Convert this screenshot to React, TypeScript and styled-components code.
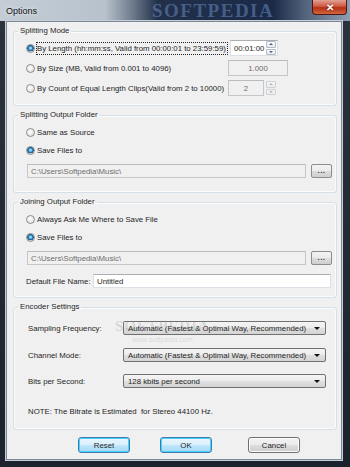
import styled, { createGlobalStyle } from "styled-components"

const GlobalStyle = createGlobalStyle`
  html, body {
    margin: 0;
    padding: 0;
    background: #1a222c;
  }
  body {
    font-family: "Liberation Sans", Arial, sans-serif;
    font-size: 7.8px;
    color: #1e1e1e;
  }
`

const Window = styled.div`
  width: 350px;
  height: 467px;
  display: flex;
  flex-direction: column;
  background: #1d252f;
  position: relative;
  overflow: hidden;
`

const TitleBar = styled.div`
  height: 21px;
  flex-shrink: 0;
  position: relative;
  display: flex;
  align-items: center;
  overflow: hidden;
  background: linear-gradient(90deg, #c4cdd6 0%, #b8c2cc 30%, #6d7a8c 38%, #22304a 45%, #1b2a47 78%, #52627b 87%, #8f9db0 100%);
`

const Title = styled.span`
  font-size: 9px;
  color: #111;
  padding-left: 6px;
  text-shadow: 0 0 4px rgba(255, 255, 255, 0.9);
`

const Watermark = styled.span`
  position: absolute;
  left: 152px;
  top: 1px;
  font-family: "Liberation Serif", "Times New Roman", serif;
  font-weight: bold;
  font-size: 19px;
  letter-spacing: 1.5px;
  line-height: 19px;
  color: rgba(110, 145, 200, 0.5);
`

const CloseButton = styled.div`
  position: absolute;
  right: 3px;
  top: 0;
  width: 35px;
  height: 15px;
  border: 1px solid #4b1a14;
  border-top: none;
  border-radius: 0 0 4px 4px;
  box-sizing: border-box;
  background: linear-gradient(180deg, #e2a193 0%, #cf5a43 45%, #b52f17 55%, #d2653c 100%);
  display: flex;
  align-items: center;
  justify-content: center;
  color: #fff;
  font-weight: bold;
  font-size: 10px;
  text-shadow: 0 0 2px #5a1000;
`

const Frame = styled.div`
  flex: 1;
  display: flex;
  padding: 0 8px 7px 6px;
  background: linear-gradient(180deg, #2a323c 0%, #1c232c 100%);
`

const Client = styled.div`
  flex: 1;
  display: flex;
  flex-direction: column;
  background: #f0f0f0;
  border: 1px solid #7d8896;
  box-shadow: 0 0 0 1px #c6ced7;
  padding: 4px 4px 6px 6px;
  position: relative;
`

const Group = styled.fieldset`
  margin: 0 0 4px 0;
  padding: 0;
  min-width: 0;
  border: 1px solid #d5dfe5;
  border-radius: 3px;
  box-shadow: inset 0 0 0 1px #fbfbfb;
`

const Legend = styled.legend`
  margin-left: 4px;
  padding: 0 2px;
  line-height: 10px;
`

const GroupBody = styled.div<{ $pt: number; $pb: number; $pl: number }>`
  display: flex;
  flex-direction: column;
  padding: ${p => p.$pt}px 0 ${p => p.$pb}px ${p => p.$pl}px;
`

const Row = styled.div<{ $h: number; $mt?: number }>`
  display: flex;
  align-items: center;
  height: ${p => p.$h}px;
  margin-top: ${p => p.$mt ?? 0}px;
`

const Choice = styled.div<{ $w?: number }>`
  display: flex;
  align-items: center;
  width: ${p => (p.$w ? `${p.$w}px` : "auto")};
  flex-shrink: 0;
`

const Radio = styled.span<{ $on?: boolean }>`
  width: 9px;
  height: 9px;
  flex-shrink: 0;
  box-sizing: border-box;
  border-radius: 50%;
  border: 1px solid #8a8c8e;
  background: ${p =>
    p.$on
      ? "radial-gradient(circle at 50% 45%, #8fd3f4 0 1px, #2a86c4 2px, #124f82 3px, #e8e8e8 3.5px, #f6f6f6 100%)"
      : "radial-gradient(circle at 40% 40%, #ffffff 0%, #e2e2e2 70%, #d0d0d0 100%)"};
`

const Label = styled.span<{ $focus?: boolean }>`
  margin-left: 1px;
  padding: 0 1px 0 0;
  line-height: 11px;
  border: 1px dotted ${p => (p.$focus ? "#222" : "transparent")};
  white-space: nowrap;
`

const TextBox = styled.div<{ $w: number; $h: number; $ml?: number; $disabled?: boolean; $center?: boolean }>`
  width: ${p => p.$w}px;
  height: ${p => p.$h}px;
  margin-left: ${p => p.$ml ?? 0}px;
  flex-shrink: 0;
  box-sizing: border-box;
  display: flex;
  align-items: center;
  justify-content: ${p => (p.$center ? "center" : "flex-start")};
  padding-left: ${p => (p.$center ? 0 : 3)}px;
  background: ${p => (p.$disabled ? "#f0f0f0" : "#fff")};
  border: 1px solid ${p => (p.$disabled ? "#c3c7cc" : "#dbdfe6")};
  border-top-color: ${p => (p.$disabled ? "#b9bdc2" : "#abadb3")};
  color: ${p => (p.$disabled ? "#6d6d6d" : "#1e1e1e")};
  white-space: nowrap;
  overflow: hidden;
`

const SpinText = styled.span`
  flex: 1;
`

const Spinner = styled.div<{ $disabled?: boolean; $ml?: number }>`
  display: flex;
  flex-direction: column;
  gap: 1px;
  width: 10px;
  height: 14px;
  margin-left: ${p => p.$ml ?? 0}px;
  margin-right: 1px;
  flex-shrink: 0;
  opacity: ${p => (p.$disabled ? 0.55 : 1)};
`

const SpinBtn = styled.div`
  flex: 1;
  border: 1px solid #b4bbc4;
  border-radius: 1px;
  background: linear-gradient(180deg, #fbfbfb, #e6e9ed);
  display: flex;
  align-items: center;
  justify-content: center;
`

const Arrow = styled.span<{ $down?: boolean; $color?: string }>`
  width: 0;
  height: 0;
  border-left: 2px solid transparent;
  border-right: 2px solid transparent;
  ${p =>
    p.$down
      ? `border-top: 2px solid ${p.$color ?? "#4d6185"};`
      : `border-bottom: 2px solid ${p.$color ?? "#4d6185"};`}
`

const SmallButton = styled.div`
  width: 21px;
  height: 14px;
  margin-left: 5px;
  box-sizing: border-box;
  border: 1px solid #8c8c8c;
  border-radius: 2px;
  background: linear-gradient(180deg, #f3f3f3 0%, #ebebeb 48%, #dddddd 52%, #cfcfcf 100%);
  display: flex;
  align-items: center;
  justify-content: center;
  color: #2a3a60;
  font-weight: bold;
  letter-spacing: 0.5px;
  line-height: 8px;
`

const FieldLabel = styled.span<{ $w: number }>`
  width: ${p => p.$w}px;
  flex-shrink: 0;
  white-space: nowrap;
`

const Combo = styled.div`
  width: 203px;
  height: 14px;
  box-sizing: border-box;
  border: 1px solid #707070;
  border-radius: 2px;
  background: linear-gradient(180deg, #f4f4f4 0%, #ececec 48%, #dfdfdf 52%, #d4d4d4 100%);
  display: flex;
  align-items: center;
  padding: 0 5px 0 4px;
  white-space: nowrap;
`

const ComboText = styled.span`
  flex: 1;
`

const ComboArrow = styled.span`
  width: 0;
  height: 0;
  border-left: 3px solid transparent;
  border-right: 3px solid transparent;
  border-top: 3px solid #111;
`

const Faint = styled.div`
  position: absolute;
  left: 108px;
  top: 297px;
  display: flex;
  flex-direction: column;
  align-items: center;
  pointer-events: none;
  color: rgba(110, 110, 110, 0.2);
  font-family: "Liberation Serif", serif;
  font-weight: bold;
  font-size: 15px;
  line-height: 14px;
  letter-spacing: 1px;
`

const FaintSmall = styled.span`
  font-family: "Liberation Sans", sans-serif;
  font-weight: normal;
  font-size: 7px;
  letter-spacing: 0;
`

const ButtonRow = styled.div`
  display: flex;
  margin-top: 3px;
  padding-left: 65px;
  gap: 30px;
`

const DialogButton = styled.div<{ $primary?: boolean; $extra?: number }>`
  width: 52px;
  height: 16px;
  margin-left: ${p => p.$extra ?? 0}px;
  box-sizing: border-box;
  border: 1px solid ${p => (p.$primary ? "#3c7fb1" : "#707070")};
  border-radius: 3px;
  box-shadow: ${p => (p.$primary ? "inset 0 0 0 1px #48d0f8" : "inset 0 0 0 1px #fcfcfc")};
  background: ${p =>
    p.$primary
      ? "linear-gradient(180deg, #eaf6fd 0%, #d9f0fc 48%, #bee6fd 52%, #a7d9f5 100%)"
      : "linear-gradient(180deg, #f2f2f2 0%, #ebebeb 48%, #dddddd 52%, #cfcfcf 100%)"};
  display: flex;
  align-items: center;
  justify-content: center;
  color: #1e1e1e;
`

const encoderRows = [
  { label: "Sampling Frequency:", value: "Automatic (Fastest & Optimal Way, Recommended)", mt: 0 },
  { label: "Channel Mode:", value: "Automatic (Fastest & Optimal Way, Recommended)", mt: 13 },
  { label: "Bits per Second:", value: "128 kbits per second", mt: 12 },
]

export default function App() {
  return (
    <>
      <GlobalStyle />
      <Window>
        <TitleBar>
          <Title>Options</Title>
          <Watermark>SOFTPEDIA</Watermark>
          <CloseButton>✕</CloseButton>
        </TitleBar>
        <Frame>
          <Client>
            <Group>
              <Legend>Splitting Mode</Legend>
              <GroupBody $pt={4} $pb={9} $pl={12}>
                <Row $h={16}>
                  <Choice $w={202}>
                    <Radio $on />
                    <Label $focus>By Length (hh:mm:ss, Valid from 00:00:01 to 23:59:59)</Label>
                  </Choice>
                  <TextBox $w={48} $h={16} $ml={2}>
                    <SpinText>00:01:00</SpinText>
                    <Spinner>
                      <SpinBtn><Arrow /></SpinBtn>
                      <SpinBtn><Arrow $down /></SpinBtn>
                    </Spinner>
                  </TextBox>
                </Row>
                <Row $h={16} $mt={4}>
                  <Choice $w={202}>
                    <Radio />
                    <Label>By Size (MB, Valid from 0.001 to 4096)</Label>
                  </Choice>
                  <TextBox $w={60} $h={16} $disabled $center>1.000</TextBox>
                </Row>
                <Row $h={16} $mt={4}>
                  <Choice $w={202}>
                    <Radio />
                    <Label>By Count of Equal Length Clips(Valid from 2 to 10000)</Label>
                  </Choice>
                  <TextBox $w={36} $h={16} $disabled $center>2</TextBox>
                  <Spinner $disabled $ml={2}>
                    <SpinBtn><Arrow $color="#888" /></SpinBtn>
                    <SpinBtn><Arrow $down $color="#888" /></SpinBtn>
                  </Spinner>
                </Row>
              </GroupBody>
            </Group>

            <Group>
              <Legend>Splitting Output Folder</Legend>
              <GroupBody $pt={5} $pb={14} $pl={12}>
                <Row $h={14}>
                  <Choice>
                    <Radio />
                    <Label>Same as Source</Label>
                  </Choice>
                </Row>
                <Row $h={14} $mt={4}>
                  <Choice>
                    <Radio $on />
                    <Label>Save Files to</Label>
                  </Choice>
                </Row>
                <Row $h={14} $mt={7}>
                  <TextBox $w={279} $h={14} $ml={1} $disabled>C:\Users\Softpedia\Music\</TextBox>
                  <SmallButton>...</SmallButton>
                </Row>
              </GroupBody>
            </Group>

            <Group>
              <Legend>Joining Output Folder</Legend>
              <GroupBody $pt={5} $pb={9} $pl={12}>
                <Row $h={14}>
                  <Choice>
                    <Radio />
                    <Label>Always Ask Me Where to Save File</Label>
                  </Choice>
                </Row>
                <Row $h={14} $mt={4}>
                  <Choice>
                    <Radio $on />
                    <Label>Save Files to</Label>
                  </Choice>
                </Row>
                <Row $h={14} $mt={7}>
                  <TextBox $w={279} $h={14} $ml={1} $disabled>C:\Users\Softpedia\Music\</TextBox>
                  <SmallButton>...</SmallButton>
                </Row>
                <Row $h={14} $mt={9}>
                  <FieldLabel $w={67}>Default File Name:</FieldLabel>
                  <TextBox $w={238} $h={14}>Untitled</TextBox>
                </Row>
              </GroupBody>
            </Group>

            <Group>
              <Legend>Encoder Settings</Legend>
              <GroupBody $pt={9} $pb={11} $pl={14}>
                {encoderRows.map(r => (
                  <Row key={r.label} $h={14} $mt={r.mt}>
                    <FieldLabel $w={95}>{r.label}</FieldLabel>
                    <Combo>
                      <ComboText>{r.value}</ComboText>
                      <ComboArrow />
                    </Combo>
                  </Row>
                ))}
                <Row $h={14} $mt={16}>
                  <FieldLabel $w={220}>NOTE: The Bitrate is Estimated&nbsp; for Stereo 44100 Hz.</FieldLabel>
                </Row>
              </GroupBody>
            </Group>

            <ButtonRow>
              <DialogButton $primary>Reset</DialogButton>
              <DialogButton $primary>OK</DialogButton>
              <DialogButton $extra={6}>Cancel</DialogButton>
            </ButtonRow>

            <Faint>
              SOFTPEDIA
              <FaintSmall>www.softpedia.com</FaintSmall>
            </Faint>
          </Client>
        </Frame>
      </Window>
    </>
  )
}
